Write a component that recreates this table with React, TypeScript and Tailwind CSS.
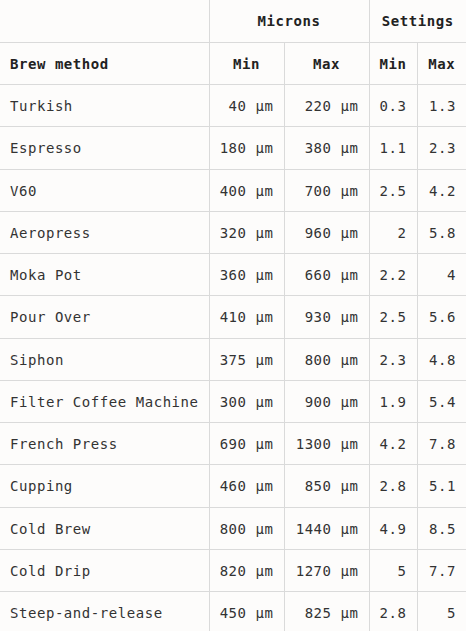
import React from 'react';

const rows: [string, number, number, number, number][] = [
  ['Turkish', 40, 220, 0.3, 1.3],
  ['Espresso', 180, 380, 1.1, 2.3],
  ['V60', 400, 700, 2.5, 4.2],
  ['Aeropress', 320, 960, 2, 5.8],
  ['Moka Pot', 360, 660, 2.2, 4],
  ['Pour Over', 410, 930, 2.5, 5.6],
  ['Siphon', 375, 800, 2.3, 4.8],
  ['Filter Coffee Machine', 300, 900, 1.9, 5.4],
  ['French Press', 690, 1300, 4.2, 7.8],
  ['Cupping', 460, 850, 2.8, 5.1],
  ['Cold Brew', 800, 1440, 4.9, 8.5],
  ['Cold Drip', 820, 1270, 5, 7.7],
  ['Steep-and-release', 450, 825, 2.8, 5],
];

const cell = 'h-[42.25px] whitespace-nowrap border-b border-r border-[#dadada] px-[10px] pt-[2px] align-middle';

const App = () => {
  return (
    <div
      className="min-h-screen w-[466px] overflow-hidden bg-[#fdfcfb] text-[14px] tracking-[0.55px] text-[#333333]"
      style={{ fontFamily: '"DejaVu Sans Mono", monospace' }}
    >
      <table className="w-[466px] table-fixed border-collapse">
        <colgroup>
          <col className="w-[209px]" />
          <col className="w-[75px]" />
          <col className="w-[85px]" />
          <col className="w-[48px]" />
          <col className="w-[49px]" />
        </colgroup>
        <thead>
          <tr>
            <th className={cell}></th>
            <th colSpan={2} className={`${cell} text-center font-bold text-[#222]`}>Microns</th>
            <th colSpan={2} className={`${cell} border-r-0 text-center font-bold text-[#222]`}>Settings</th>
          </tr>
          <tr>
            <th className={`${cell} text-left font-bold text-[#222]`}>Brew method</th>
            <th className={`${cell} text-center font-bold text-[#222]`}>Min</th>
            <th className={`${cell} text-center font-bold text-[#222]`}>Max</th>
            <th className={`${cell} text-center font-bold text-[#222]`}>Min</th>
            <th className={`${cell} border-r-0 text-center font-bold text-[#222]`}>Max</th>
          </tr>
        </thead>
        <tbody>
          {rows.map(([name, min, max, smin, smax], i) => (
            <tr key={name}>
              <td className={`${cell} text-left ${i === rows.length - 1 ? 'border-b-0' : ''}`}>{name}</td>
              <td className={`${cell} text-right ${i === rows.length - 1 ? 'border-b-0' : ''}`}>{min} µm</td>
              <td className={`${cell} text-right ${i === rows.length - 1 ? 'border-b-0' : ''}`}>{max} µm</td>
              <td className={`${cell} text-right ${i === rows.length - 1 ? 'border-b-0' : ''}`}>{smin}</td>
              <td className={`${cell} border-r-0 text-right ${i === rows.length - 1 ? 'border-b-0' : ''}`}>{smax}</td>
            </tr>
          ))}
        </tbody>
      </table>
    </div>
  );
};

export default App;
